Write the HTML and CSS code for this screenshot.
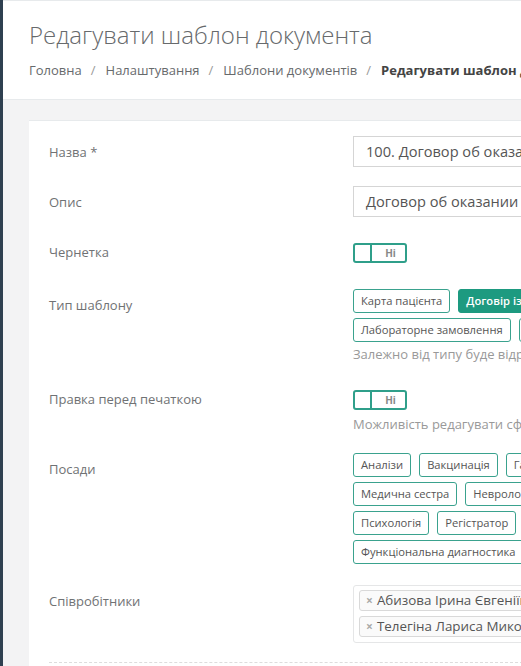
FILE: index.html
```html
<!DOCTYPE html>
<html lang="uk">
<head>
<meta charset="utf-8">
<title>Редагувати шаблон документа</title>
<link rel="stylesheet" href="styles.css">
</head>
<body>
<div class="layout">
  <div class="sidebar"></div>
  <div class="main">
    <header class="page-head">
      <h1 class="title">Редагувати шаблон документа</h1>
      <nav class="crumbs">
        <span class="crumb">Головна</span><span class="sep">/</span>
        <span class="crumb">Налаштування</span><span class="sep">/</span>
        <span class="crumb">Шаблони документів</span><span class="sep">/</span>
        <span class="crumb current">Редагувати шаблон документа</span>
      </nav>
    </header>
    <div class="content">
      <div class="card">
        <div class="row">
          <div class="label">Назва *</div>
          <div class="field"><div class="input">100. Договор об оказании платных медицинских услуг</div></div>
        </div>
        <div class="row">
          <div class="label">Опис</div>
          <div class="field"><div class="input">Договор об оказании платных медицинских услуг</div></div>
        </div>
        <div class="row">
          <div class="label">Чернетка</div>
          <div class="field toggle-field"><span class="toggle"><span class="knob"></span><span class="toggle-text">Ні</span></span></div>
        </div>
        <div class="row">
          <div class="label">Тип шаблону</div>
          <div class="field">
            <div class="pills">
              <span class="pill">Карта пацієнта</span>
              <span class="pill active">Договір із пацієнтом</span>
              <span class="pill">Лабораторне замовлення</span>
              <span class="pill">Направлення</span>
            </div>
            <div class="help">Залежно від типу буде відрізнятися набір змінних</div>
          </div>
        </div>
        <div class="row">
          <div class="label">Правка перед печаткою</div>
          <div class="field">
            <div class="toggle-field compact"><span class="toggle"><span class="knob"></span><span class="toggle-text">Ні</span></span></div>
            <div class="help flush">Можливість редагувати сформований документ перед друком</div>
          </div>
        </div>
        <div class="row">
          <div class="label">Посади</div>
          <div class="field">
            <div class="pills roles">
              <span class="pill">Аналізи</span>
              <span class="pill">Вакцинація</span>
              <span class="pill">Гастроентерологія</span>
              <span class="pill">Медична сестра</span>
              <span class="pill">Неврологія</span>
              <span class="pill">Педіатрія</span>
              <span class="pill">Психологія</span>
              <span class="pill">Регістратор</span>
              <span class="pill">Терапія</span>
              <span class="pill">Функціональна диагностика</span>
            </div>
          </div>
        </div>
        <div class="row">
          <div class="label">Співробітники</div>
          <div class="field">
            <div class="select">
              <span class="tag"><span class="x">×</span>Абизова Ірина Євгеніївна</span>
              <span class="tag"><span class="x">×</span>Телегіна Лариса Миколаївна</span>
            </div>
          </div>
        </div>
        <div class="divider"></div>
      </div>
    </div>
  </div>
</div>
</body>
</html>
```
FILE: styles.css
```css
html, body {
  margin: 0;
  padding: 0;
  overflow: hidden;
}
body {
  font-family: "Open Sans", "Noto Sans", sans-serif;
  background: #f3f3f4;
  color: #676a6c;
}
.layout {
  display: flex;
  width: 1100px;
  min-height: 666px;
}
.sidebar {
  width: 3px;
  flex: none;
  background: #2f4050;
}
.main {
  flex: 1;
  display: flex;
  flex-direction: column;
}
.page-head {
  background: #fff;
  border-top: 1px solid #e7eaec;
  border-bottom: 1px solid #e7eaec;
  padding: 18px 26px 0;
  height: 80px;
}
.title {
  margin: 0;
  font-weight: 300;
  font-size: 24px;
  line-height: 32px;
  color: #676a6c;
  white-space: nowrap;
}
.crumbs {
  margin-top: 10px;
  display: flex;
  font-size: 13px;
  line-height: 18px;
  white-space: nowrap;
  color: #676a6c;
}
.sep {
  margin: 0 10px 0 9px;
  color: #999;
}
.crumb.current {
  font-weight: 700;
  color: #444;
}
.content {
  padding: 20px 26px;
}
.card {
  background: #fff;
  border-top: 1px solid #e7eaec;
  padding: 15px 20px 0;
  width: 900px;
}
.row {
  display: grid;
  grid-template-columns: 304px 320px;
  margin-bottom: 19px;
}
.label {
  font-size: 13px;
  line-height: 18px;
  padding-top: 7px;
  color: #707274;
}
.input {
  width: 500px;
  height: 29px;
  border: 1px solid #d5d5d5;
  padding: 0 12px;
  font-size: 14.6px;
  line-height: 29px;
  color: #555;
  white-space: nowrap;
}
.toggle-field {
  min-height: 34px;
  padding-top: 7px;
  box-sizing: border-box;
}
.toggle-field.compact {
  min-height: 32px;
}
.toggle {
  display: inline-flex;
  align-items: center;
  width: 54px;
  height: 20px;
  box-sizing: border-box;
  border: 2px solid #2f9f8a;
  border-radius: 3px;
  vertical-align: top;
}
.knob {
  width: 15px;
  height: 100%;
  border-right: 2px solid #2f9f8a;
}
.toggle-text {
  flex: 1;
  text-align: center;
  font-size: 10px;
  font-weight: 700;
  color: #888;
  padding-left: 4px;
}
.pills {
  display: flex;
  flex-wrap: wrap;
  gap: 5px 8px;
}
.pills.roles {
  margin-bottom: 2px;
}
.pill {
  height: 24px;
  box-sizing: border-box;
  border: 1px solid #3aa28e;
  border-radius: 3px;
  padding: 0 7px;
  font-size: 11.2px;
  line-height: 22px;
  color: #555;
  white-space: nowrap;
}
.pill.active {
  background: #1d9a80;
  border-color: #1d9a80;
  color: #fff;
  font-weight: 600;
}
.help {
  margin-top: 3px;
  font-size: 13px;
  line-height: 19px;
  color: #999;
  white-space: nowrap;
}
.help.flush {
  margin-top: 0;
}
.select {
  width: 340px;
  border: 1px solid #e5e6e7;
  border-radius: 3px;
  padding: 4px 5px 5px;
  display: flex;
  flex-direction: column;
  align-items: flex-start;
  gap: 5px;
}
.tag {
  display: inline-block;
  border: 1px solid #d9d9d9;
  border-radius: 3px;
  background: #fafafa;
  height: 21px;
  box-sizing: border-box;
  padding: 0 8px 0 6px;
  font-size: 13.4px;
  line-height: 19px;
  color: #555;
  white-space: nowrap;
}
.x {
  color: #aaa;
  font-weight: 700;
  font-size: 12px;
  margin-right: 4px;
}
.divider {
  border-top: 1px dashed #ddd;
  height: 20px;
}
```
